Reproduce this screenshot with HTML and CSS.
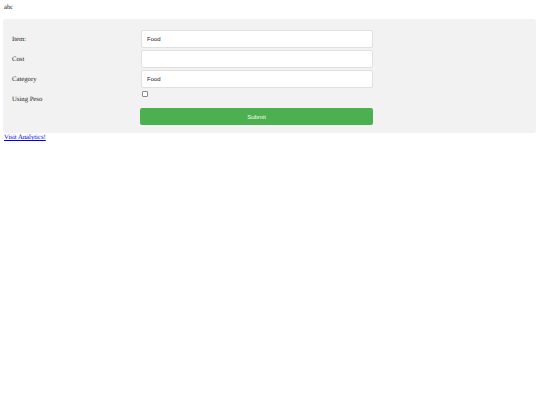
FILE: index.html
```html
<!DOCTYPE html>
<html>
<head>
<meta charset="utf-8">
<link rel="stylesheet" href="styles.css">
</head>
<body>
<div class="title">abc</div>
<div class="panel">
  <form class="form">
    <div class="row">
      <label class="label">Item:</label>
      <input class="field" type="text" value="Food">
    </div>
    <div class="row">
      <label class="label">Cost</label>
      <input class="field" type="text" value="">
    </div>
    <div class="row">
      <label class="label">Category</label>
      <input class="field" type="text" value="Food">
    </div>
    <div class="row row-check">
      <label class="label">Using Peso</label>
      <span class="check-cell"><input class="check" type="checkbox"></span>
    </div>
    <div class="row row-submit">
      <span class="label"></span>
      <button class="submit" type="button">Submit</button>
    </div>
  </form>
</div>
<a class="link" href="#">Visit Analytics!</a>
</body>
</html>
```

FILE: styles.css
```css
html, body {
  margin: 0;
  padding: 0;
  background: #ffffff;
}
body {
  padding: 3px 3px 0 4px;
  font-family: "Liberation Serif", "Times New Roman", serif;
  font-size: 6.7px;
  color: #222;
  text-rendering: geometricPrecision;
}
.title {
  height: 16px;
  line-height: 8px;
  padding-top: 1px;
  box-sizing: border-box;
}
.panel {
  margin-left: -1px;
  width: 533px;
  background: #f2f2f2;
  border-radius: 3px;
  padding: 11px 9px 8px 9px;
  box-sizing: border-box;
}
.form {
  margin: 0;
  display: flex;
  flex-direction: column;
}
.row {
  display: flex;
  align-items: center;
  height: 18px;
  margin-bottom: 2px;
}
.label {
  width: 129px;
  flex: none;
  line-height: 8px;
  padding-top: 2px;
}
.field {
  width: 232px;
  height: 18px;
  box-sizing: border-box;
  margin: 0;
  border: 1px solid #e0e0e0;
  border-radius: 2px;
  background: #fff;
  padding: 0 0 0 5px;
  font-family: "Liberation Sans", Arial, sans-serif;
  font-size: 6px;
  color: #222;
  outline: none;
}
.row-check {
  height: 12px;
  margin-bottom: 0;
  align-items: flex-start;
}
.row-check .label {
  padding-top: 6px;
}
.check-cell {
  display: flex;
  padding-top: 1px;
  padding-left: 1px;
}
.check {
  -webkit-appearance: none;
  appearance: none;
  margin: 0;
  width: 6px;
  height: 6px;
  box-sizing: border-box;
  border: 1px solid #8a8a8a;
  border-radius: 1px;
  background: #fff;
}
.row-submit {
  margin-top: 6px;
  height: 17px;
  margin-bottom: 0;
}
.row-submit .label {
  width: 128px;
}
.submit {
  width: 233px;
  height: 17px;
  margin: 0;
  border: none;
  border-radius: 2px;
  background: #4caf50;
  color: #f4fff4;
  font-family: "Liberation Sans", Arial, sans-serif;
  font-size: 6px;
  padding: 0;
}
.link {
  display: inline-block;
  margin-top: 1px;
  color: #0000ee;
  text-decoration: underline;
  line-height: 8px;
}
```
